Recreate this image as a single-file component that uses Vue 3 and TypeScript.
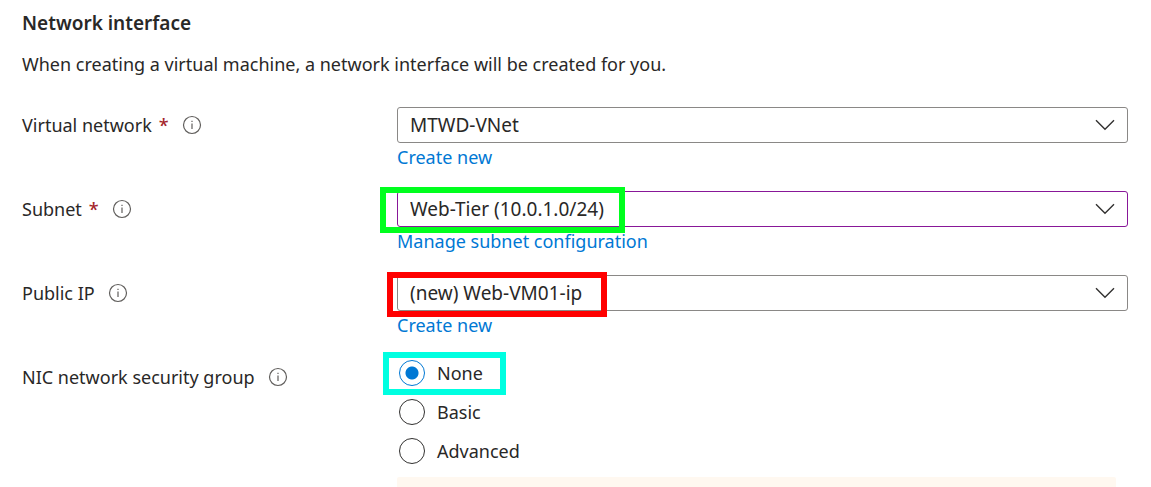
<script setup lang="ts">
import { ref } from 'vue'

interface Field {
  id: string
  label: string
  required: boolean
  value: string
  link: string
  edited?: boolean
  mark?: string
}

const fields = ref<Field[]>([
  { id: 'vnet', label: 'Virtual network', required: true, value: 'MTWD-VNet', link: 'Create new' },
  {
    id: 'subnet',
    label: 'Subnet',
    required: true,
    value: 'Web-Tier (10.0.1.0/24)',
    link: 'Manage subnet configuration',
    edited: true,
    mark: 'green',
  },
  { id: 'public-ip', label: 'Public IP', required: false, value: '(new) Web-VM01-ip', link: 'Create new', mark: 'red' },
])

const groups: string[] = ['None', 'Basic', 'Advanced']
const nsg = ref('None')
</script>

<template>
  <main class="page">
    <h1>Network interface</h1>
    <p class="intro">When creating a virtual machine, a network interface will be created for you.</p>

    <form class="form" @submit.prevent>
      <div v-for="field in fields" :key="field.id" class="row">
        <div class="caption">
          <label :for="field.id">{{ field.label }}</label>
          <span v-if="field.required" class="star" aria-hidden="true">*</span>
          <svg class="info" viewBox="0 0 20 20" aria-hidden="true">
            <circle cx="10" cy="10" r="8.5" />
            <path d="M10 8.5V14M10 5.7V7.1" />
          </svg>
        </div>
        <div class="control">
          <div class="box">
            <select :id="field.id" v-model="field.value" :class="{ edited: field.edited }" :required="field.required">
              <option>{{ field.value }}</option>
            </select>
            <svg class="chevron" viewBox="0 0 20 12" aria-hidden="true">
              <path d="M1 1.2L10 10.2L19 1.2" />
            </svg>
            <span v-if="field.mark" class="mark" :class="field.mark"></span>
          </div>
          <a href="#">{{ field.link }}</a>
        </div>
      </div>

      <div class="row">
        <div class="caption">
          <span id="nsg-label">NIC network security group</span>
          <svg class="info" viewBox="0 0 20 20" aria-hidden="true">
            <circle cx="10" cy="10" r="8.5" />
            <path d="M10 8.5V14M10 5.7V7.1" />
          </svg>
        </div>
        <div class="control">
          <div class="radios" role="radiogroup" aria-labelledby="nsg-label">
            <label v-for="group in groups" :key="group" class="radio">
              <input v-model="nsg" type="radio" name="nsg" :value="group" />
              <span>{{ group }}</span>
            </label>
            <span class="mark cyan"></span>
          </div>
          <div class="notice"></div>
        </div>
      </div>
    </form>
  </main>
</template>

<style>
body {
  margin: 0;
  background: #fff;
}
</style>

<style scoped>
.page {
  padding: 9px 23px 0 22px;
  font-family: 'Noto Sans', 'Open Sans', sans-serif;
  font-size: 18px;
  line-height: 28px;
  color: #292827;
}

h1 {
  margin: 0;
  font-size: 19px;
  font-weight: 600;
  line-height: 28px;
}

.intro {
  margin: 13px 0 29px;
}

.form {
  display: flex;
  flex-direction: column;
  gap: 20px;
}

.row {
  display: grid;
  grid-template-columns: 375px minmax(0, 1fr);
  align-items: start;
}

.caption {
  display: flex;
  align-items: center;
  height: 36px;
}

.star {
  margin-left: 7px;
  color: #a4262c;
  font-weight: 500;
}

.info {
  width: 20px;
  height: 20px;
  margin-left: 13px;
  fill: none;
  stroke: #605e5c;
  stroke-width: 1.2;
}

.control {
  display: flex;
  flex-direction: column;
  align-items: flex-start;
}

.box {
  position: relative;
  width: 100%;
}

select {
  display: block;
  box-sizing: border-box;
  width: 100%;
  height: 36px;
  padding: 0 44px 0 12px;
  border: 1px solid #8a8886;
  border-radius: 3px;
  background: #fff;
  color: inherit;
  font: inherit;
  font-size: 19px;
  appearance: none;
}

select.edited {
  border-color: #881798;
}

.chevron {
  position: absolute;
  top: 12px;
  right: 13px;
  width: 20px;
  height: 12px;
  fill: none;
  stroke: #323130;
  stroke-width: 1.4;
  pointer-events: none;
}

a {
  color: #0078d4;
  text-decoration: none;
}

.mark {
  position: absolute;
  box-sizing: border-box;
  border: 6px solid;
  pointer-events: none;
}

.green {
  top: -4px;
  left: -17px;
  width: 245px;
  height: 46px;
  border-color: #00ff1e;
}

.red {
  top: -3px;
  left: -10px;
  width: 220px;
  height: 45px;
  border-color: #f00;
}

.cyan {
  top: -7px;
  left: -14px;
  width: 123px;
  height: 43px;
  border-color: #00ffe1;
}

.radios {
  position: relative;
  display: flex;
  flex-direction: column;
  gap: 11px;
}

.radio {
  display: flex;
  align-items: center;
  gap: 12px;
}

.radio input {
  box-sizing: border-box;
  width: 26px;
  height: 26px;
  margin: 0 0 0 2px;
  border: 1px solid #323130;
  border-radius: 50%;
  background: #fff;
  appearance: none;
}

.radio input:checked {
  border-color: #0078d4;
  background: radial-gradient(circle, #0078d4 6px, #fff 7px);
}

.notice {
  align-self: stretch;
  height: 10px;
  margin: 12px 12px 0 0;
  border-radius: 2px 2px 0 0;
  background: #fff8f0;
}
</style>
